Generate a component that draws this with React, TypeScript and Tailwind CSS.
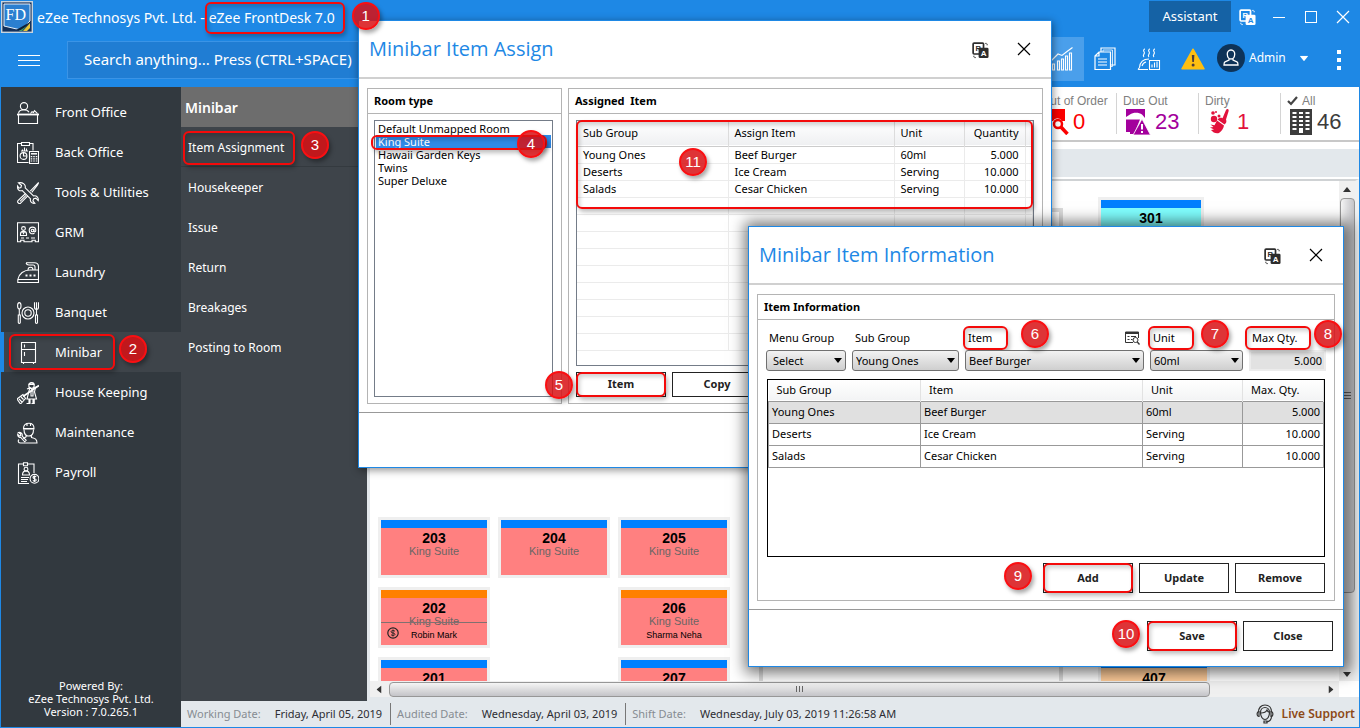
import { useState, type ReactNode } from 'react'
import clsx from 'clsx'

const iconProps = {
  width: 22,
  height: 22,
  viewBox: '0 0 22 22',
  fill: 'none',
  stroke: 'currentColor',
  strokeWidth: 1.1,
}

const FrontOfficeIcon = () => (
  <svg {...iconProps}>
    <circle cx="7" cy="4.2" r="3.6" />
    <path d="M1.5 11.500c.3-3 3-3.700 5.500-3.700s4 .7 5 2.400M13.500 11.500l1.500-1.800 1.500.8 1-1.800 3 3" />
    <path d="M0 12.500h22" strokeWidth="1.800" />
    <path d="M1.500 13v8.500h19V13" />
  </svg>
)

const BackOfficeIcon = () => (
  <svg {...iconProps}>
    <path d="M4.500 1.500h-4v19h11M12.500 1.500h3.500v7" />
    <path d="M4.500.5h8v3h-8z" />
    <path d="M5.500 8.500v-1M7.500 8.500v-3M9.500 8.500v-2M4 9h7" />
    <circle cx="6.500" cy="14" r="3.400" />
    <path d="M6.500 10.500V14h3.500" />
    <path d="M12.500 9.500h9v12h-9z" />
    <path d="M14 11.800h6" strokeWidth="1.500" />
    <path d="M14.500 14v6M17 14v6M19.500 14v6" strokeDasharray="1.200 1" strokeWidth="1.500" />
  </svg>
)

const ToolsIcon = () => (
  <svg {...iconProps}>
    <path d="M1.500.8l3 2.700-.6 2L2 6.200.6 4C0 7 2 9.500 5.300 8.600l8.200 8.200c-.8 2.600 1.200 5 4.400 4.500l-2-2.500.8-2 2.200-.6 2.300 2.400c.7-3-1.700-5.500-4.700-4.600L8.200 5.800C9 3 6 0 1.500.8z" />
    <path d="M21.700.5l-8.400 8.600M21.700.5l-1.500 3-5.500 6.800M8.500 11.500L1 18.500c-1.200 1.800 1 3.900 2.600 2.700l7.200-7.400M3 19.300l6-6" />
  </svg>
)

const GrmIcon = () => (
  <svg {...iconProps}>
    <path d="M.5.8h21v19h-3.200v-1.500H15v1.500H7v-1.500H3.700v1.500H.5z" />
    <circle cx="6.500" cy="6.500" r="1.900" />
    <path d="M3.500 13.500v-1.500c0-3.500 6-3.500 6 0v1.500zM5.500 9.500l1 2 1-2" />
    <circle cx="15.500" cy="8.500" r="1.300" />
    <path d="M17 7v2.300c.3 1 1.800.7 1.800-.8 0-4.500-6.600-4.500-6.600 0 0 3.200 3 3.800 5.300 2.700M4 16h3M9 16h3M14 16h4" />
  </svg>
)

const LaundryIcon = () => (
  <svg {...iconProps}>
    <path d="M.8 17.500C2 11.500 7 8 13 8h8.500v12.500H.8zM.8 17.500h20.700M9 .8h8.500c2.500 0 4 1.500 4 4V8M9 .8c.5 2 1.500 2.200 3 2.200h4c1.500 0 2 .6 2 2V8" />
    <path d="M11 8c0-2 1-2.800 2.500-2.800S16 6 16 8" />
    <path d="M8.500 13.500h2M12.500 13.500h2M16.500 13.500h2" strokeWidth="1.800" />
  </svg>
)

const BanquetIcon = () => (
  <svg {...iconProps}>
    <circle cx="11" cy="11" r="6" />
    <circle cx="11" cy="11" r="3.200" />
    <ellipse cx="2.300" cy="3.800" rx="1.700" ry="3.200" />
    <path d="M2.300 7v6M1.300 13h2v7.500c0 1.200-2 1.200-2 0zM17.500.3v5c0 2.800 4 2.800 4 0v-5M19.500.3V13M18.500 13h2v7.500c0 1.200-2 1.200-2 0z" />
  </svg>
)

const MinibarIcon = () => (
  <svg {...iconProps}>
    <path d="M4.500.5h14v20h-14zM4.500 7.500h14M7.500 2.500v3M7.500 10v4M6.500 20.500V22M16.500 20.500V22" />
  </svg>
)

const HousekeepingIcon = () => (
  <svg {...iconProps}>
    <circle cx="14.500" cy="3.700" r="2.700" />
    <path d="M12 2.500c0-2.500 5-2.500 5 0zM10 7l3-1.300 2 2 2.500-2L21.500 4M12.800 6l-1.300 5-1.500 6h9.500l-2-7 1-4.500M14 9h2v5h-2z" />
    <path d="M22 3.500L6 14.500" strokeWidth="1.600" />
    <path d="M6 12.500l-6 4.500 3.500 5 5-5.500zM2 17l3 3M4 15l2.500 2.500M12.500 17v5M17 17v5M9.500 21.500h3M14.500 21.500h3" />
    <path d="M13 17.500h-1v4h1zM17 17.500h-1v4h1z" fill="currentColor" />
  </svg>
)

const MaintenanceIcon = () => (
  <svg {...iconProps}>
    <path d="M6.500 6.500C6.500 3 8.500 1.300 12 1.300s5 1.700 5 5.200zM6 7h11.500M10 1v3M13.500 1v3" />
    <path d="M7 7.500c0 4 2 6.500 4.800 6.500s4.700-2.500 4.700-6.500M9 13v2l-3 1.500M14.500 13v2.500c3 .8 5.500 1 5.500 5.500H3.500c-2.300 0-3-2-1.500-3.500" />
    <path d="M1.500 10.500l2 1.500.2 1.500-1.500.3-1.500-1.500c-.2 2 1.200 3.500 3 3l4 4.500 1.500-1.500-4-4.300c.6-2.200-1.400-4-3.700-3.500z" />
  </svg>
)

const PayrollIcon = () => (
  <svg {...iconProps}>
    <path d="M6 2H1.500v19.500H12M11 2h6v9" />
    <path d="M6.500.8h4v3h-4z" />
    <circle cx="9" cy="7.200" r="1.900" />
    <path d="M5.500 13c0-5.500 7-5.500 7 0zM4 15.500h8M4 17.500h7M4 19.500h6" />
    <circle cx="17.500" cy="16.800" r="4.400" />
    <path d="M19.200 15c-.8-1-3.200-.9-3.200.5 0 1.600 3.200.8 3.200 2.500 0 1.400-2.500 1.400-3.300.4M17.500 13.500v6.500" />
  </svg>
)

const TranslateIcon = ({ badge }: { badge: string }) => (
  <svg width="17" height="17" viewBox="0 0 18 18" fill="none">
    <rect x="1.200" y="1.200" width="11" height="11.500" rx="1" stroke="currentColor" strokeWidth="1.800" />
    <text x="3.600" y="10" fontSize="8" fontWeight="700" fill="currentColor" fontFamily="Liberation Sans, sans-serif">R</text>
    <rect x="7" y="6" width="10.500" height="11" rx="1.500" fill="currentColor" />
    <text x="9.200" y="14.800" fontSize="8.500" fontWeight="700" fill={badge} fontFamily="Liberation Sans, sans-serif">A</text>
    <path d="M14 1.500h2v3M2 14.500v2h3" stroke="currentColor" strokeDasharray="1.500 1" />
  </svg>
)

const CloseIcon = () => (
  <svg width="14" height="14" viewBox="0 0 14 14" fill="none" stroke="currentColor" strokeWidth="1.200">
    <path d="M1 1l12 12M13 1L1 13" />
  </svg>
)

const Caret = ({ className }: { className?: string }) => (
  <svg width="8" height="5" viewBox="0 0 8 5" className={className}>
    <path d="M0 0h8L4 5z" fill="currentColor" />
  </svg>
)

/* red outline + numbered bubble used for the walkthrough steps */
const Ring = ({ className }: { className: string }) => (
  <span
    className={clsx(
      'pointer-events-none absolute rounded-md border-2 border-[#f40a0a] shadow-[2px_3px_4px_rgba(0,0,0,0.25),inset_2px_3px_4px_rgba(0,0,0,0.18)]',
      className
    )}
  />
)

const Step = ({ n, className }: { n: number; className: string }) => (
  <span
    className={clsx(
      'pointer-events-none absolute z-30 flex size-7 items-center justify-center rounded-full border-2 border-[#fa0f12] bg-[#d81014]/85 text-[15px] font-normal text-white shadow-[2px_3px_4px_rgba(0,0,0,0.35)] font-["Liberation_Sans",sans-serif]',
      className
    )}
  >
    {n}
  </span>
)

const menu = [
  { label: 'Front Office', icon: <FrontOfficeIcon /> },
  { label: 'Back Office', icon: <BackOfficeIcon /> },
  { label: 'Tools & Utilities', icon: <ToolsIcon /> },
  { label: 'GRM', icon: <GrmIcon /> },
  { label: 'Laundry', icon: <LaundryIcon /> },
  { label: 'Banquet', icon: <BanquetIcon /> },
  { label: 'Minibar', icon: <MinibarIcon /> },
  { label: 'House Keeping', icon: <HousekeepingIcon /> },
  { label: 'Maintenance', icon: <MaintenanceIcon /> },
  { label: 'Payroll', icon: <PayrollIcon /> },
]

const subMenu = ['Item Assignment', 'Housekeeper', 'Issue', 'Return', 'Breakages', 'Posting to Room']

const roomTypes = ['Default Unmapped Room', 'King Suite', 'Hawaii Garden Keys', 'Twins', 'Super Deluxe']

const items = [
  { group: 'Young Ones', item: 'Beef Burger', unit: '60ml', qty: '5.000' },
  { group: 'Deserts', item: 'Ice Cream', unit: 'Serving', qty: '10.000' },
  { group: 'Salads', item: 'Cesar Chicken', unit: 'Serving', qty: '10.000' },
]

function TitleBar() {
  return (
    <div className="flex h-9 items-center text-white">
      <svg width="32" height="32" viewBox="0 0 32 32" className="mb-1 shrink-0">
        <rect x=".7" y=".7" width="30.600" height="30.600" fill="#14315c" stroke="#c9d4de" strokeWidth="1.400" />
        <path d="M3 3h26v17l-9 9L3 25z" fill="#2b7fd0" stroke="#e8f1fa" />
        <path d="M29 21l-8 8h-6z" fill="#0d2038" />
        <path d="M29 22l-7 8h4l3-3z" fill="#e7c53b" />
        <path d="M26 25l-5 5h-3z" fill="#3f9b6f" />
        <text x="4.500" y="19" fontSize="16" fill="#fff" fontFamily="Liberation Serif, serif">FD</text>
      </svg>
      <h1 className="flex items-center pb-0.5 pl-1 text-sm whitespace-nowrap">
        eZee Technosys Pvt. Ltd. -
        <span className="relative ml-1">
          eZee FrontDesk 7.0
          <Ring className="-top-1.5 -right-2.5 -bottom-1.5 -left-1" />
          <Step n={1} className="-top-1.5 left-[143px]" />
        </span>
      </h1>
      <div className="ml-auto flex h-full items-start">
        <button className="h-[31px] w-[82px] bg-[#1562a5] text-[13px]">Assistant</button>
        <button aria-label="Language" className="flex h-8 w-8 items-center justify-center">
          <TranslateIcon badge="#1e88e5" />
        </button>
        <button aria-label="Minimize" className="flex h-8 w-8 items-center justify-center">
          <span className="h-px w-3 bg-white" />
        </button>
        <button aria-label="Maximize" className="flex h-8 w-8 items-center justify-center">
          <span className="size-3 border border-white" />
        </button>
        <button aria-label="Close window" className="flex h-8 w-8 items-center justify-center">
          <CloseIcon />
        </button>
      </div>
    </div>
  )
}

function Toolbar() {
  return (
    <div className="flex h-[50px] items-start text-white">
      <button aria-label="Menu" className="ml-[17px] flex h-[46px] w-[22px] flex-col justify-center gap-1">
        <span className="h-px bg-white" />
        <span className="h-px bg-white" />
        <span className="h-px bg-white" />
      </button>
      <input
        type="text"
        aria-label="Search"
        placeholder="Search anything... Press (CTRL+SPACE)"
        className="mt-1 ml-[27px] h-[38px] w-[600px] border border-[#3b94e6] bg-[#207dd3] px-4 pb-0.5 text-[15px] placeholder:text-white focus:outline-none"
      />
      <div className="ml-auto flex">
        <button aria-label="Reports" className="flex h-11 w-11 items-center justify-center bg-[#4a9feb]">
          <svg width="22" height="24" viewBox="0 0 22 24" fill="none" stroke="currentColor" strokeWidth="1.100">
            <path d="M1.500 17h2v6h-2zM6.500 14h2v9h-2zM10.500 12h2v11h-2zM14.500 9h2v14h-2zM18.500 6h2v17h-2zM.5 13.500L7 7l4 1.500 5-4L21.500.5" />
          </svg>
        </button>
        <button aria-label="Documents" className="flex h-11 w-11 items-center justify-center pr-0.5">
          <svg width="22" height="24" viewBox="0 0 22 24" fill="none" stroke="currentColor" strokeWidth="1.200">
            <path d="M1 9l4-4h11.500v17.500H1zM1 9h4V5M7 5V1h14v17h-4.500M4 12h9M4 15h9M4 18h9" />
            <path d="M9 5V3h9.500v16.500h-2" strokeWidth=".8" />
          </svg>
        </button>
        <button aria-label="Meal report" className="flex h-11 w-11 items-center justify-center pr-0.5">
          <svg width="24" height="24" viewBox="0 0 24 24" fill="none" stroke="currentColor" strokeWidth="1.100">
            <path d="M7 10c-2.500-2 2-3 0-5.500C6 3.500 7 2 8 2M12 10c-2.500-2 2-3 0-5.500C11 3.500 12 2 13 2M17 10c-2.500-2 2-3 0-5.500C16 3.500 17 2 18 2M1 22.500h10M2.500 20.500C3 15 6 12 12 12M5 19c.5-2 2-3.500 4-4M1 22.500l1.500-2M12.500 13.500h10v9h-10zM15 20.500v-3M17.500 20.500v-5M20 20.500v-6" />
          </svg>
        </button>
        <button aria-label="Alerts" className="flex h-11 w-11 items-center justify-center pr-0.5">
          <svg width="24" height="22" viewBox="0 0 24 22">
            <path d="M12 1.200L23 20.800H1z" fill="#fdbf11" stroke="#fdbf11" strokeWidth="1.500" strokeLinejoin="round" />
            <path d="M10.800 7h2.600l-.5 7h-1.600z" fill="#4c3b3b" />
            <circle cx="12.100" cy="17" r="1.500" fill="#4c3b3b" />
          </svg>
        </button>
        <button className="flex h-[42px] w-[103px] items-center pl-px text-xs">
          <span className="mr-1 flex size-7 items-center justify-center rounded-full bg-[#0e3358]">
            <svg width="16" height="18" viewBox="0 0 16 18" fill="none" stroke="currentColor" strokeWidth="1.300">
              <path d="M8 1C5.500 1 4 3 4.300 5.500 4.500 8 6 10 8 10s3.500-2 3.700-4.500C12 3 10.500 1 8 1zM6 9.500V11l-4 1.800c-.8.4-1 1.200-1 3.200h14c0-2-.2-2.800-1-3.200L10 11V9.500" />
            </svg>
          </span>
          Admin
          <Caret className="ml-3.5 scale-110" />
        </button>
        <button aria-label="More" className="flex h-[46px] w-10 flex-col items-center justify-center gap-1">
          <span className="size-1 bg-white" />
          <span className="size-1 bg-white" />
          <span className="size-1 bg-white" />
        </button>
      </div>
    </div>
  )
}

function Sidebar() {
  return (
    <nav className="flex w-[180px] shrink-0 flex-col bg-[#32393f] pt-[5px] text-[13px] text-white">
      {menu.map(m => {
        const active = m.label === 'Minibar'
        return (
          <a
            key={m.label}
            href="#"
            className={clsx(
              'relative flex h-10 items-center gap-4 border-l-[3px] pt-0.5 pl-[13px]',
              active ? 'border-[#1e88e5] bg-[#3e444a]' : 'border-transparent'
            )}
          >
            {m.icon}
            {m.label}
            {active && (
              <>
                <Ring className="top-0.5 left-[5px] h-9 w-[106px]" />
                <Step n={2} className="top-[3px] left-[115px]" />
              </>
            )}
          </a>
        )
      })}
      <p className="mt-auto pb-[9px] text-center text-[11px] leading-[13px]">
        Powered By:
        <br />
        eZee Technosys Pvt. Ltd.
        <br />
        Version : 7.0.265.1
      </p>
    </nav>
  )
}

function SubMenu() {
  return (
    <nav className="w-[186px] shrink-0 bg-[#3e444a] text-xs text-white">
      <h2 className="flex h-10 items-center bg-[#6d6d6d] pt-0.5 pl-1 text-sm font-semibold">Minibar</h2>
      {subMenu.map((label, i) => (
        <a
          key={label}
          href="#"
          className={clsx('relative flex h-10 items-center pt-0.5 pl-[7px]', i === 0 && 'border-b border-[#343a3f]')}
        >
          {label}
          {i === 0 && (
            <>
              <Ring className="top-1 left-0.5 h-[34px] w-[112px]" />
              <Step n={3} className="top-1 left-[120px]" />
            </>
          )}
        </a>
      ))}
    </nav>
  )
}

type StatProps = { label: ReactNode; value: string; className: string; icon: ReactNode }

function Stat({ label, value, className, icon }: StatProps) {
  return (
    <div className={clsx('my-1.5 border-l border-[#d4d4d4] pl-1.5', className)}>
      <div className="flex h-[15px] items-center gap-1 text-xs whitespace-nowrap text-[#808080]">{label}</div>
      <div className="flex items-center gap-1 pl-0.5 text-[22px] leading-[27px]">
        {icon}
        {value}
      </div>
    </div>
  )
}

function Stats() {
  return (
    <div className='flex h-[55px] justify-end overflow-hidden border-b-2 border-[#c8c8c8] bg-white font-["Liberation_Sans",sans-serif]'>
      <Stat
        label="Out of Order"
        value="0"
        className="w-[82px] text-[#fb0000]"
        icon={
          <svg width="26" height="26" viewBox="0 0 26 26" fill="currentColor">
            <path d="M2 0h20v12H19a5 5 0 0 0-9 0H2z" />
            <circle cx="15" cy="15" r="4" fill="none" stroke="currentColor" strokeWidth="2.500" />
            <path d="M17.500 17.500l7 7.500" stroke="currentColor" strokeWidth="3.500" />
            <path d="M8 12v9H4v-9z" />
          </svg>
        }
      />
      <Stat
        label="Due Out"
        value="23"
        className="w-[82px] text-[#a3009c]"
        icon={
          <svg width="26" height="26" viewBox="0 0 26 26" fill="currentColor">
            <path d="M1 0h19v9L17 5.500C14 3 8 3 5 5.500L1 8z" />
            <path d="M1 10.500h14L9 25H5v-2H1z" />
            <path d="M17 10L25.500 26H8z" stroke="#fff" strokeWidth=".8" />
            <path d="M17 15v5.500M17 22v2" stroke="#fff" strokeWidth="2" />
          </svg>
        }
      />
      <Stat
        label="Dirty"
        value="1"
        className="w-[82px] text-[#e2123c]"
        icon={
          <svg width="26" height="26" viewBox="0 0 26 26" fill="currentColor">
            <circle cx="6" cy="4" r="1.800" />
            <circle cx="9" cy="3" r="1" />
            <circle cx="7" cy="10" r="3.200" />
            <circle cx="12" cy="7" r="1.500" />
            <path d="M20.500 0c1 0 1.500 1 1 2.500l-2.500 8c1 2 0 4-1.500 5l-7-5c1.500-1.800 3.500-2 5-1.200L19 1c.3-.6.8-1 1.500-1zM10 11.500l7 5c-.5 3-2.500 6-5 7.500-3 1-6-.5-8-3l3-.5-4-2 3.500-.5-3-2.500 4 .8z" />
          </svg>
        }
      />
      <Stat
        label={
          <>
            <svg width="11" height="10" viewBox="0 0 11 10" fill="none" stroke="#444" strokeWidth="2.200">
              <path d="M1 5l3 3 6-7" />
            </svg>
            All
          </>
        }
        value="46"
        className="w-[79px] text-[#3c3c3c]"
        icon={
          <svg width="24" height="26" viewBox="0 0 24 26">
            <path d="M1 0h22v26H1z" fill="currentColor" />
            <path d="M3.500 4h4M10 4h4M16.500 4h4M3.500 8h4M10 8h4M16.500 8h4M3.500 12h4M10 12h4M16.500 12h4M3.500 16h4M10 16h4M16.500 16h4M3.500 20h4M16.500 20h4" stroke="#fff" strokeWidth="2" />
            <path d="M10 19h4v5h-4z" fill="#fff" />
          </svg>
        }
      />
    </div>
  )
}

type Room = { no: string; type?: string; guest?: string; bar: string; fill: string; cell: string; due?: boolean }

const upperRooms: Room[] = [{ no: '301', bar: 'bg-[#0080ff]', fill: 'bg-[#80ffff]', cell: 'col-start-7 w-[100px]' }]

const lowerRooms: Room[] = [
  { no: '203', type: 'King Suite', bar: 'bg-[#0080ff]', fill: 'bg-[#ff8080]', cell: 'col-start-1' },
  { no: '204', type: 'King Suite', bar: 'bg-[#0080ff]', fill: 'bg-[#ff8080]', cell: 'col-start-2' },
  { no: '205', type: 'King Suite', bar: 'bg-[#0080ff]', fill: 'bg-[#ff8080]', cell: 'col-start-3' },
  { no: '202', type: 'King Suite', guest: 'Robin Mark', bar: 'bg-[#ff8000]', fill: 'bg-[#ff8080]', cell: 'col-start-1', due: true },
  { no: '206', type: 'King Suite', guest: 'Sharma Neha', bar: 'bg-[#ff8000]', fill: 'bg-[#ff8080]', cell: 'col-start-3' },
  { no: '201', bar: 'bg-[#0080ff]', fill: 'bg-[#ff8080]', cell: 'col-start-1' },
  { no: '207', bar: 'bg-[#0080ff]', fill: 'bg-[#ff8080]', cell: 'col-start-3' },
  { no: '407', bar: 'bg-[#0080ff]', fill: 'bg-[#ffcc99]', cell: 'col-start-7' },
]

function RoomCard({ room }: { room: Room }) {
  return (
    <div className={clsx('relative h-[55px] text-center ring-3 ring-[#efefef]', room.fill, room.cell)}>
      <div className={clsx('h-2', room.bar)} />
      <div className="pt-0.5 text-sm leading-4 font-bold">{room.no}</div>
      {room.type && <div className="text-[11px] leading-[11px] text-[#6b6565]">{room.type}</div>}
      {room.guest && <div className="text-[9px] leading-4">{room.guest}</div>}
      {room.due && (
        <>
          <span className="absolute inset-x-0 top-8 h-px bg-[#807070]" />
          <svg width="12" height="12" viewBox="0 0 12 12" fill="none" stroke="#222" className="absolute bottom-1.5 left-1.5">
            <circle cx="6" cy="6" r="5.200" strokeWidth="1.200" />
            <path d="M8 4.300C7 3 4 3.300 4 4.800c0 1.700 4 .7 4 2.500 0 1.400-3 1.600-4 .4M6 2.500v7" strokeWidth=".9" />
          </svg>
        </>
      )}
    </div>
  )
}

function RoomPlan() {
  return (
    <main className="flex min-w-0 flex-1 flex-col border-l-[3px] border-[#e3e8ec] bg-white">
      <Stats />
      <div className="mt-[7px] h-7 bg-[#e3e8ec]" />
      <div className="mt-0.5 flex min-h-0 flex-1 border-t-2 border-r-4 border-[#cfd2d4] border-r-[#eef1f3]">
        <div className='relative min-w-0 flex-1 overflow-hidden pt-[19px] pl-[11px] font-["Liberation_Sans",sans-serif] text-black'>
          <div className="absolute top-[27px] left-[389px] h-[560px] w-[304px] border-4 border-[#dcdcdc]" />
          <div className="grid h-80 grid-cols-[repeat(7,106px)] gap-x-3.5">
            {upperRooms.map(r => (
              <RoomCard key={r.no} room={r} />
            ))}
          </div>
          <div className="grid grid-cols-[repeat(7,106px)] gap-x-3.5 gap-y-[15px]">
            {lowerRooms.map(r => (
              <RoomCard key={r.no} room={r} />
            ))}
          </div>
        </div>
        <div className="flex w-4 flex-col items-center bg-[#f0f0f0] py-1 text-[#333]">
          <Caret className="my-0.5 rotate-180" />
          <div className="mt-1 flex w-[15px] flex-[5] flex-col items-center justify-center gap-0.5 rounded-sm border border-[#979797] bg-linear-to-r from-[#f5f5f5] to-[#c4c4c8]">
            <span className="h-px w-2 bg-[#666]" />
            <span className="h-px w-2 bg-[#666]" />
            <span className="h-px w-2 bg-[#666]" />
          </div>
          <div className="flex-1" />
          <Caret />
        </div>
      </div>
      <div className="mr-5 flex h-4 items-center bg-[#f0f0f0] px-1 text-[#333]">
        <Caret className="mx-px rotate-90" />
        <div className="ml-[5px] flex h-[15px] flex-[7] items-center justify-center gap-0.5 rounded-sm border border-[#979797] bg-linear-to-b from-[#f5f5f5] to-[#c4c4c8]">
          <span className="h-1.5 w-px bg-[#666]" />
          <span className="h-1.5 w-px bg-[#666]" />
          <span className="h-1.5 w-px bg-[#666]" />
        </div>
        <div className="flex-1" />
        <Caret className="-rotate-90" />
      </div>
      <div className="h-1 bg-[#e3e8ec]" />
    </main>
  )
}

function StatusBar() {
  const dates = [
    ['Working Date:', 'Friday, April 05, 2019'],
    ['Audited Date:', 'Wednesday, April 03, 2019'],
    ['Shift Date:', 'Wednesday, July 03, 2019 11:26:58 AM'],
  ]
  return (
    <footer className="flex h-[26px] items-center bg-[#e3e8ec] text-[11px] whitespace-nowrap">
      {dates.map(([label, value], i) => (
        <div key={label} className={clsx('flex h-[22px] items-center pr-2 pl-1.5', i > 0 && 'border-l border-[#777]')}>
          <span className="text-[#868c92]">{label}</span>
          <span className="ml-3.5 text-[#2d2d33]">{value}</span>
        </div>
      ))}
      <a href="#" className="mr-1 ml-auto flex items-center gap-2 text-xs font-semibold text-[#8d4a17]">
        <svg width="18" height="20" viewBox="0 0 18 20" fill="none" stroke="#333" strokeWidth="1.200">
          <path d="M2.500 8C2.500 4 5 1 9 1s6.500 3 6.500 7M4.500 8.500c0-3 2-5 4.500-5s4.500 2 4.500 5c0 4-2 7-4.500 7s-4.500-3-4.500-7zM5 9c3 0 5-1 6-3 .5 1.500 1.500 2.500 2.500 2.500M15.500 12.500c0 3-2 5-5 5.500" />
          <path d="M3 7.500v5C.5 12.500.5 7.500 3 7.500zM15 7.500v5c2.500 0 2.500-5 0-5zM8 17h3v2H8z" />
        </svg>
        Live Support
      </a>
    </footer>
  )
}

function DialogHeader({ title, id }: { title: string; id: string }) {
  return (
    <header className="flex h-[58px] items-center border-b-2 border-[#d0d0d0] px-2.5">
      <h2 id={id} className='font-["Open_Sans",sans-serif] text-xl text-[#1e88e5]'>
        {title}
      </h2>
      <button aria-label="Language" className="mt-0.5 ml-auto text-[#2d2d2d]">
        <TranslateIcon badge="#fff" />
      </button>
      <button aria-label={'Close ' + title} className="mr-2.5 ml-7 text-black">
        <CloseIcon />
      </button>
    </header>
  )
}

function Panel({ title, className, children }: { title: string; className?: string; children: ReactNode }) {
  return (
    <section className={clsx('flex flex-col border border-[#b4b4b4]', className)}>
      <h3 className="flex h-[25px] shrink-0 items-center border-b border-[#b4b4b4] px-1.5 text-[11px] font-bold whitespace-pre">{title}</h3>
      {children}
    </section>
  )
}

function ActionButton({ children, className }: { children: ReactNode; className?: string }) {
  return (
    <button className={clsx('relative w-[90px] border border-[#222] bg-white text-[11px] font-bold text-[#222]', className)}>
      {children}
    </button>
  )
}

function AssignDialog() {
  const [selected, setSelected] = useState('King Suite')

  return (
    <div
      role="dialog"
      aria-labelledby="assign-title"
      className="absolute top-[19px] left-[357px] z-10 flex w-[694px] flex-col border border-[#1e88e5] bg-white text-[11px] text-black shadow-[1px_2px_8px_rgba(0,0,0,0.45)]"
    >
      <DialogHeader title="Minibar Item Assign" id="assign-title" />
      <div className="flex gap-1.5 border-b border-[#999] px-2 py-[9px] pb-2">
        <Panel title="Room type" className="w-[195px]">
          <ul className="relative m-1.5 mr-2 h-[277px] border border-[#747c88] p-px">
            {roomTypes.map(r => (
              <li key={r} className={clsx('h-[13px]', r === selected && 'bg-[#2f8ae8] text-white')}>
                <button onClick={() => setSelected(r)} className="block w-full px-0.5 text-left leading-[13px]">
                  {r}
                </button>
              </li>
            ))}
            <Ring className="top-3.5 -left-1 h-[15px] w-[176px]" />
            <Step n={4} className="top-[9px] left-[142px]" />
          </ul>
        </Panel>
        <Panel title="Assigned  Item" className="flex-1">
          <div className="relative mx-[7px] mt-1.5 mr-2 h-[246px] border border-[#747c88]">
            <table className="w-full table-fixed border-collapse">
              <colgroup>
                <col className="w-[151px]" />
                <col className="w-[166px]" />
                <col className="w-[70px]" />
                <col className="w-[61px]" />
                <col />
              </colgroup>
              <thead>
                <tr className="h-[25px] border-b border-[#ccc] bg-linear-to-b from-white to-[#eff0f2] text-left [&>th]:border-r [&>th]:border-[#dcdcdc] [&>th]:px-1.5 [&>th]:font-normal">
                  <th>Sub Group</th>
                  <th>Assign Item</th>
                  <th>Unit</th>
                  <th>
                    <span className="flex justify-end">Quantity</span>
                  </th>
                  <th />
                </tr>
              </thead>
              <tbody>
                {Array.from({ length: 12 }, (_, i) => items[i]).map((row, i) => (
                  <tr key={i} className="h-[17px] border-b border-[#ebebeb] [&>td]:border-r [&>td]:border-[#ebebeb] [&>td]:px-1.5 [&>td]:py-0 [&>td]:leading-4">
                    <td>{row?.group}</td>
                    <td>{row?.item}</td>
                    <td>{row?.unit}</td>
                    <td className="text-right">{row?.qty}</td>
                    <td />
                  </tr>
                ))}
              </tbody>
            </table>
            <Ring className="-top-px -left-px h-[89px] w-[457px]" />
            <Step n={11} className="top-[27px] left-[102px]" />
          </div>
          <div className="mx-[7px] mt-1.5 mb-[5px] flex gap-1.5">
            <ActionButton className="h-[25px]">
              Item
              <Ring className="-inset-px" />
              <Step n={5} className="-top-0.5 -left-8" />
            </ActionButton>
            <ActionButton className="h-[25px]">Copy</ActionButton>
          </div>
        </Panel>
      </div>
      <div className="h-[54px]" />
    </div>
  )
}

function Combo({ id, options, className }: { id: string; options: string[]; className?: string }) {
  return (
    <div className="relative">
      <select
        id={id}
        className={clsx(
          'block h-[21px] w-full appearance-none rounded-[3px] border border-[#707070] bg-linear-to-b from-[#f2f2f2] to-[#cfcfcf] leading-[18px]',
          className
        )}
      >
        {options.map(o => (
          <option key={o}>{o}</option>
        ))}
      </select>
      <Caret className="pointer-events-none absolute top-2 right-1" />
    </div>
  )
}

function InfoDialog() {
  return (
    <div
      role="dialog"
      aria-labelledby="info-title"
      className="absolute top-[225px] left-[747px] z-20 w-[596px] border border-[#1e88e5] bg-white text-[11px] text-black shadow-[2px_1px_14px_5px_rgba(0,0,0,0.55)]"
    >
      <DialogHeader title="Minibar Item Information" id="info-title" />
      <div className="border-b border-[#999] px-2 py-[9px] pb-2">
        <Panel title="Item Information">
          <div className="grid grid-cols-[80px_107px_1fr_93px_77px] gap-x-1.5 px-2 pt-1.5">
            <label htmlFor="menu-group" className="flex h-6 items-center pl-[3px]">Menu Group</label>
            <label htmlFor="sub-group" className="flex h-6 items-center pl-[3px]">Sub Group</label>
            <div className="relative flex h-6 items-center justify-between pr-1 pl-[3px]">
              <label htmlFor="item">Item</label>
              <button aria-label="Browse items">
                <svg width="15" height="14" viewBox="0 0 15 14" fill="none" stroke="#333">
                  <path d="M13.500 7V1H.5v10.500H8" />
                  <path d="M.5 2h13" strokeWidth="2" />
                  <path d="M2.500 5.500h2M6 5.500h5M2.500 8.500h2M6 8.500h1.500" />
                  <circle cx="10.500" cy="9" r="2.500" />
                  <path d="M12.300 11l2.200 2.500" strokeWidth="1.300" />
                </svg>
              </button>
              <Ring className="top-0 -left-0.5 h-6 w-[45px]" />
              <Step n={6} className="-top-1.5 left-[56px]" />
            </div>
            <label htmlFor="unit" className="relative flex h-6 items-center pl-[3px]">
              Unit
              <Ring className="top-0 -left-0.5 h-6 w-[46px]" />
              <Step n={7} className="-top-1.5 left-[51px]" />
            </label>
            <label htmlFor="max-qty" className="relative flex h-6 items-center pl-[3px]">
              Max Qty.
              <Ring className="top-0 -left-1 h-6 w-[66px]" />
              <Step n={8} className="-top-1.5 left-[65px]" />
            </label>
            <Combo id="menu-group" options={['Select']} className="px-1.5" />
            <Combo id="sub-group" options={['Young Ones', 'Deserts', 'Salads']} className="px-[3px]" />
            <Combo id="item" options={['Beef Burger', 'Ice Cream', 'Cesar Chicken']} className="px-[3px]" />
            <Combo id="unit" options={['60ml', 'Serving']} className="px-[3px]" />
            <input id="max-qty" defaultValue="5.000" className="h-[21px] min-w-0 border-2 border-[#ececec] bg-[#e2e2e2] pr-0.5 text-right" />
          </div>
          <div className="mx-[9px] mt-2 h-[178px] border border-black">
            <table className="w-full table-fixed border-collapse">
              <colgroup>
                <col className="w-[152px]" />
                <col />
                <col className="w-[100px]" />
                <col className="w-[81px]" />
              </colgroup>
              <thead>
                <tr className="h-[21px] border-b border-[#999] bg-linear-to-b from-white to-[#f3f4f5] text-left [&>th]:border-r [&>th]:border-[#e2e2e2] [&>th]:px-2 [&>th]:font-normal">
                  <th>Sub Group</th>
                  <th>Item</th>
                  <th>Unit</th>
                  <th>Max. Qty.</th>
                </tr>
              </thead>
              <tbody>
                {items.map((row, i) => (
                  <tr key={row.group} className={clsx('h-[22px] [&>td]:border [&>td]:border-[#999] [&>td]:px-[3px] [&>td]:py-0', i === 0 && 'bg-[#e0e0e0]')}>
                    <td>{row.group}</td>
                    <td>{row.item}</td>
                    <td>{row.unit}</td>
                    <td>
                      <span className="flex justify-end">{row.qty}</span>
                    </td>
                  </tr>
                ))}
              </tbody>
            </table>
          </div>
          <div className="mx-[9px] mt-1.5 mb-[7px] flex justify-end gap-1.5">
            <ActionButton className="h-[30px]">
              Add
              <Ring className="-inset-px" />
              <Step n={9} className="-top-0.5 -left-10" />
            </ActionButton>
            <ActionButton className="h-[30px]">Update</ActionButton>
            <ActionButton className="h-[30px]">Remove</ActionButton>
          </div>
        </Panel>
      </div>
      <div className="flex justify-end gap-1.5 px-2.5 pt-[11px] pb-[15px]">
        <ActionButton className="h-[30px]">
          Save
          <Ring className="-inset-px" />
          <Step n={10} className="-top-0.5 -left-9" />
        </ActionButton>
        <ActionButton className="h-[30px]">Close</ActionButton>
      </div>
    </div>
  )
}

export default function App() {
  return (
    <div className='relative flex h-screen min-h-[680px] flex-col overflow-hidden border border-[#1e88e5] bg-[#1e88e5] font-["Noto_Sans",sans-serif]'>
      <TitleBar />
      <Toolbar />
      <div className="flex min-h-0 flex-1">
        <Sidebar />
        <div className="flex min-w-0 flex-1 flex-col">
          <div className="flex min-h-0 flex-1">
            <SubMenu />
            <RoomPlan />
          </div>
          <StatusBar />
        </div>
      </div>
      <AssignDialog />
      <InfoDialog />
    </div>
  )
}
